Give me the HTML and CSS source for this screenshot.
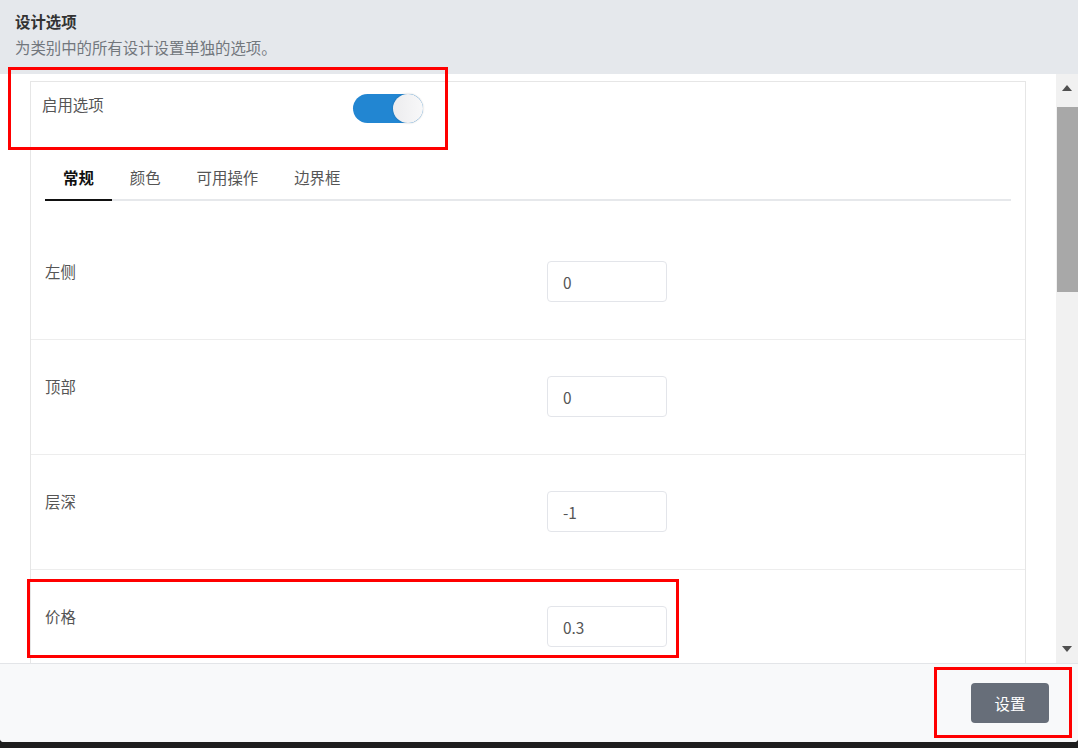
FILE: index.html
```html
<!DOCTYPE html>
<html lang="zh-CN">
<head>
    <meta charset="UTF-8">
    <title>设计选项</title>
    <link rel="stylesheet" href="styles.css">
</head>
<body>

    <div class="modal">
        <div class="modal-header">
            <div class="title">设计选项</div>
            <div class="subtitle">为类别中的所有设计设置单独的选项。</div>
        </div>

        <div class="modal-body">
            <div class="scroll-content">
                <div class="card">
                    <div class="enable-row">
                        <span>启用选项</span>
                        <div class="switch"><div class="knob"></div></div>
                    </div>

                    <div class="tabs">
                        <div class="tab active">常规</div>
                        <div class="tab">颜色</div>
                        <div class="tab">可用操作</div>
                        <div class="tab">边界框</div>
                    </div>

                    <div class="rows">
                        <div class="row">
                            <label>左侧</label>
                            <input type="text" class="field" value="0">
                        </div>
                        <div class="row">
                            <label>顶部</label>
                            <input type="text" class="field" value="0">
                        </div>
                        <div class="row">
                            <label>层深</label>
                            <input type="text" class="field" value="-1">
                        </div>
                        <div class="row">
                            <label>价格</label>
                            <input type="text" class="field" value="0.3">
                        </div>
                    </div>
                </div>
            </div>

            <!-- fake scrollbar -->
            <div class="scrollbar">
                <div class="sb-btn"><span class="arrow-up"></span></div>
                <div class="sb-track"><div class="sb-thumb"></div></div>
                <div class="sb-btn"><span class="arrow-down"></span></div>
            </div>
        </div>

        <div class="modal-footer">
            <button class="set-button">设置</button>
        </div>

        <!-- red annotation boxes -->
        <div class="mark mark-enable"></div>
        <div class="mark mark-price"></div>
        <div class="mark mark-button"></div>
    </div>

</body>
</html>
```

FILE: styles.css
```css
/* Basic reset */
* {
    margin: 0;
    padding: 0;
    box-sizing: border-box;
}

body {
    background: #1e1e1e;
    font-family: "Noto Sans CJK SC", "Noto Sans", sans-serif;
    font-size: 15.4px;
    color: #555;
    width: 1078px;
    height: 748px;
    overflow: hidden;
}

/* Modal */
.modal {
    position: relative;
    width: 1078px;
    height: 742px;
    background: #fff;
    border-radius: 0 0 4px 4px;
    overflow: hidden;
    display: flex;
    flex-direction: column;
}

.modal-header {
    background: #e5e8ec;
    padding: 11px 15px 17px;
}

.title {
    font-weight: bold;
    color: #333;
    line-height: 20px;
    margin-bottom: 6px;
}

.subtitle {
    color: #72777d;
    line-height: 20px;
}

/* Body with scroll area */
.modal-body {
    flex: 1;
    display: flex;
    min-height: 0;
}

.scroll-content {
    flex: 1;
    overflow: hidden;
    padding: 7px 30px 0;
}

.card {
    border: 1px solid #e6e6e6;
    background: #fff;
}

.enable-row {
    display: flex;
    justify-content: space-between;
    align-items: flex-start;
    width: 381px;
    margin: 12px 0 0 11px;
    line-height: 20px;
}

.switch {
    width: 70px;
    height: 29px;
    border-radius: 15px;
    background: #2286d2;
    display: flex;
    justify-content: flex-end;
}

.knob {
    width: 30px;
    height: 29px;
    border-radius: 50%;
    background: linear-gradient(to right, #ececee, #f8f8f9);
    box-shadow: 0 0 2px rgba(0, 0, 0, 0.25);
}

/* Tabs */
.tabs {
    display: flex;
    margin: 32px 14px 0;
    border-bottom: 2px solid #e6e8eb;
}

.tab {
    padding: 12px 18px;
    line-height: 20px;
    color: #555;
    margin-bottom: -2px;
    border-bottom: 2px solid transparent;
}

.tab.active {
    color: #111;
    font-weight: bold;
    border-bottom-color: #111;
}

/* Option rows */
.rows {
    margin-top: 24px;
}

.row {
    display: grid;
    grid-template-columns: 502px 120px;
    padding: 36px 14px 37px;
    border-bottom: 1px solid #ededed;
}

.row label {
    line-height: 20px;
    color: #555;
}

.field {
    width: 120px;
    height: 41px;
    border: 1px solid #e3e5ea;
    border-radius: 4px;
    padding: 0 15px;
    font-family: inherit;
    font-size: 15.4px;
    color: #555;
    outline: none;
}

/* Scrollbar */
.scrollbar {
    width: 22px;
    background: #f1f1f1;
    display: flex;
    flex-direction: column;
}

.sb-btn {
    height: 28px;
    display: flex;
    justify-content: center;
    align-items: center;
}

.arrow-up {
    border-left: 5.5px solid transparent;
    border-right: 5.5px solid transparent;
    border-bottom: 6px solid #505050;
}

.arrow-down {
    border-left: 5.5px solid transparent;
    border-right: 5.5px solid transparent;
    border-top: 6px solid #505050;
}

.sb-track {
    flex: 1;
    padding: 5px 0 0 1px;
}

.sb-thumb {
    height: 185px;
    background: #a8a8a8;
}

/* Footer */
.modal-footer {
    height: 79px;
    background: #f8f9fa;
    border-top: 1px solid #e3e5e8;
    display: flex;
    justify-content: flex-end;
    align-items: center;
    padding-right: 29px;
}

.set-button {
    width: 78px;
    height: 40px;
    border: none;
    border-radius: 4px;
    background: #676e79;
    color: #fff;
    font-family: inherit;
    font-size: 15.4px;
}

/* Annotation boxes */
.mark {
    position: absolute;
    border: 3px solid #ff0000;
}

.mark-enable {
    left: 8px;
    top: 67px;
    width: 440px;
    height: 83px;
}

.mark-price {
    left: 27px;
    top: 579px;
    width: 652px;
    height: 79px;
}

.mark-button {
    left: 934px;
    top: 667px;
    width: 138px;
    height: 71px;
}
```
